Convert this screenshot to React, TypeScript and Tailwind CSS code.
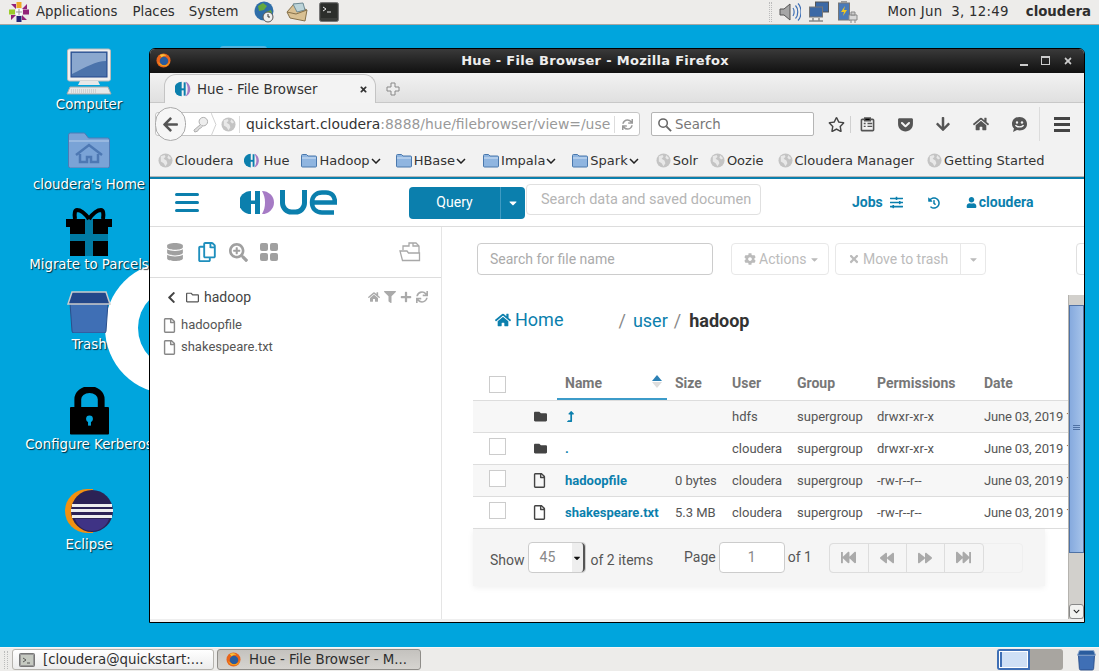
import React from 'react'
import {
  FaArrowDown,
  FaArrowLeft,
  FaBackward,
  FaCaretDown,
  FaChevronDown,
  FaChevronLeft,
  FaCog,
  FaDatabase,
  FaFastBackward,
  FaFastForward,
  FaFilter,
  FaFolder,
  FaForward,
  FaGetPocket,
  FaHistory,
  FaHome,
  FaLevelUpAlt,
  FaPlus,
  FaRegCopy,
  FaRegFile,
  FaRegFolder,
  FaRegStar,
  FaSearchPlus,
  FaSlidersH,
  FaSync,
  FaTimes,
  FaUser,
} from 'react-icons/fa'

const sans = "font-['DejaVu_Sans',sans-serif]"
const roboto = "font-['Roboto',sans-serif]"

const Globe = ({ className = '' }: { className?: string }) => (
  <svg viewBox="0 0 16 16" className={`h-[15px] w-[15px] shrink-0 ${className}`}>
    <circle cx="8" cy="8" r="7.5" fill="#c4c4c4" />
    <path d="M3 3.5 7 2l1 2-2 2 3 2 1 3-2 3-2-3-3-2ZM11 2.5l3 3-2 1.5-2-2Z" fill="#e8e8e8" />
  </svg>
)

const HueMark = ({ className = '' }: { className?: string }) => (
  <svg viewBox="0 0 24 24" className={className}>
    <path d="M10 1a11 11 0 0 0 0 22Z" fill="#0b7fad" />
    <path d="M6 11h8v3H6Z" fill="#0b7fad" />
    <path d="M13 2h3v20h-3Z" fill="#0b7fad" />
    <path d="M16 1c2 4 3 7 3 11s-1 7-3 11c4-1 7-6 7-11S20 2 16 1Z" fill="#a67bc5" />
  </svg>
)

const FolderMini = () => (
  <svg viewBox="0 0 16 15" className="h-[15px] w-[16px] shrink-0">
    <path d="M.5 2.5a1 1 0 0 1 1-1h4l1.5 1.5h7.5a1 1 0 0 1 1 1v9a1 1 0 0 1-1 1h-13a1 1 0 0 1-1-1Z" fill="#8fb5e0" stroke="#4a78ad" />
    <path d="M1 5h14" stroke="#d3e3f5" />
  </svg>
)

const Firefox = ({ className = '' }: { className?: string }) => (
  <svg viewBox="0 0 16 16" className={className}>
    <circle cx="8" cy="8" r="7.5" fill="#e8641b" />
    <circle cx="8.5" cy="8.5" r="4.5" fill="#2a5c9e" />
    <path d="M2 9c1 4 5 6 9 5 2-1 4-3 4-6-1 3-3 5-6 5-3 0-5-2-7-4Z" fill="#f3a11e" />
    <path d="M4 2c2-1 5-1 7 1-2-.5-4 0-5 1.500Z" fill="#f6c33a" />
  </svg>
)

const PanelLogo = () => (
  <svg viewBox="0 0 22 22" className="h-[22px] w-[22px]">
    <rect x="8.500" y="1" width="5" height="6" fill="#efa724" />
    <rect x="15" y="8.500" width="6" height="5" fill="#932279" />
    <rect x="8.500" y="15" width="5" height="6" fill="#262577" />
    <rect x="1" y="8.500" width="6" height="5" fill="#9ccd2a" />
    <path d="M3 3h5v5Z M19 3v5h-5Z M19 19h-5v-5Z M3 19v-5h5Z" fill="#932279" />
    <path d="M8 8h6v6H8Z" fill="#fff" />
    <path d="M11 8v6M8 11h6" stroke="#999" />
  </svg>
)

const TopPanel = () => (
  <div className={`flex h-[25px] shrink-0 items-center border-b border-[#a8a6a2] bg-[#edecea] text-[13.33px] text-[#2e2e2e] ${sans}`}>
    <div className="ml-[8px]">
      <PanelLogo />
    </div>
    <span className="ml-[6px]">Applications</span>
    <span className="ml-[15px]">Places</span>
    <span className="ml-[14px]">System</span>
    <svg viewBox="0 0 22 22" className="ml-[14px] h-[22px] w-[22px]">
      <circle cx="11" cy="10" r="9.500" fill="#2e6da8" />
      <path d="M5 5l5-3 4 3-3 4-5 1ZM13 11l5-2 1 3-4 4Z" fill="#63a83c" />
      <circle cx="15" cy="16" r="5" fill="#eee" stroke="#555" />
      <path d="M15 13v3h2" stroke="#333" fill="none" />
    </svg>
    <svg viewBox="0 0 22 22" className="ml-[11px] h-[22px] w-[22px]">
      <path d="M1 11 8 3l13 6-2 11-15-3Z" fill="#d9c193" stroke="#86714a" />
      <path d="M7 3l10-1 2 7-8 2Z" fill="#bcd4d9" stroke="#6d8a94" />
      <path d="M1 11l9 2 11-4" fill="none" stroke="#86714a" />
    </svg>
    <svg viewBox="0 0 20 20" className="ml-[11px] h-[20px] w-[20px]">
      <rect x=".5" y=".5" width="19" height="19" rx="2" fill="#3b3d3a" stroke="#777" />
      <rect x="2" y="2" width="16" height="14" fill="#2c2e2b" />
      <path d="M4 5l3 2-3 2M8 10h4" stroke="#eee" fill="none" />
    </svg>
    <div className="ml-auto flex items-center">
      <div className="mr-[7px] h-[20px] w-[3px] border-x border-dotted border-[#bbb]" />
      <svg viewBox="0 0 22 22" className="h-[22px] w-[22px]">
        <path d="M1 8h4l6-5v16l-6-5H1Z" fill="#a6a6a6" stroke="#555" />
        <path d="M14 7c1.500 2 1.500 6 0 8M16.500 4.500c3 3 3 10 0 13M19 2.500c4 4 4 13 0 17" fill="none" stroke="#3e6fb5" strokeWidth="1.200" />
      </svg>
      <svg viewBox="0 0 22 22" className="ml-[7px] h-[22px] w-[22px]">
        <rect x="7.500" y="1" width="13" height="10" fill="#3c69a6" stroke="#555" />
        <rect x="1.500" y="6" width="13" height="10" fill="#3c69a6" stroke="#777" />
        <path d="M1 20h14M5 17v3M11 17v3" stroke="#888" strokeWidth="1.500" />
      </svg>
      <svg viewBox="0 0 22 24" className="ml-[7px] h-[24px] w-[22px]">
        <rect x="1.500" y="3" width="11" height="17" fill="#4a7ab8" stroke="#777" />
        <rect x="4" y="1" width="6" height="2" fill="#999" />
        <path d="M8 6 4 12h3l-1 4 4-6H7Z" fill="#f2c81f" />
        <path d="M12 15h8v5h-8Z" fill="#d8d8d8" stroke="#888" />
        <path d="M14 12h4v3h-4ZM14 20v3M18 20v3" fill="#ccc" stroke="#888" />
      </svg>
      <span className="ml-[28px] tracking-[0.25px]">Mon Jun&nbsp; 3, 12:49</span>
      <span className="ml-[17px] mr-[8px] font-bold">cloudera</span>
    </div>
  </div>
)

const DesktopIcon = ({ top, label, children }: { top: number; label: string; children: React.ReactNode }) => (
  <div className="absolute left-[9px] flex w-[160px] flex-col items-center" style={{ top: top - 25 }}>
    <div className="flex h-[50px] items-end">{children}</div>
    <span className={`mt-[1px] whitespace-nowrap text-[13.33px] leading-[16px] text-white [text-shadow:1px_1px_1px_rgba(0,0,0,0.75)] ${sans}`}>{label}</span>
  </div>
)

const Desktop = () => (
  <>
    {/* big logo on the wallpaper, mostly hidden by the window */}
    <div className="absolute left-[105px] top-[237px] h-[132px] w-[132px] rounded-full bg-white" />
    <div className="absolute left-[138px] top-[262px] h-[82px] w-[82px] rounded-full bg-[#00a5dd]" />
    <div className="absolute left-[220px] top-[21px] h-[3px] w-[47px] rounded-t-sm bg-[#4fb4e0]" />

    <DesktopIcon top={46} label="Computer">
      <svg viewBox="0 0 46 48" className="h-[48px] w-[46px]">
        <rect x="1.500" y="1" width="43" height="32" rx="2" fill="#f0f0f0" stroke="#bbb" />
        <rect x="5" y="4" width="36" height="25" fill="#4b73ab" stroke="#23478a" />
        <path d="M6 5h34v8c-10 0-20 6-34 13Z" fill="#8ba8cf" />
        <path d="M14 33h18l2 4H12Z" fill="#e8e8e8" />
        <path d="M4 39h38l3 7H1Z" fill="#e8e8e8" stroke="#aaa" />
        <path d="M5 42h26M5 44h26" stroke="#bbb" strokeDasharray="1 1" />
      </svg>
    </DesktopIcon>
    <DesktopIcon top={126} label="cloudera's Home">
      <svg viewBox="0 0 42 36" className="mb-[8px] h-[36px] w-[42px]">
        <path d="M.5 3a2 2 0 0 1 2-2h14l4 5h19a2 2 0 0 1 2 2v26a2 2 0 0 1-2 2h-37a2 2 0 0 1-2-2Z" fill="#7aa3d6" stroke="#4d7ab5" />
        <path d="M1 9h40" stroke="#b6cdea" />
        <path d="M8 23 21 13l13 10M12 22v8h7v-5h4v5h7v-8" fill="none" stroke="#4d78b3" strokeWidth="2.500" />
      </svg>
    </DesktopIcon>
    <DesktopIcon top={206} label="Migrate to Parcels">
      <svg viewBox="0 0 46 48" className="h-[48px] w-[46px]">
        <path d="M4 14h38v34H4Z" fill="#000" />
        <path d="M0 11h46v8H0Z" fill="#000" />
        <path d="M19 11h8v37h-8ZM4 26h38v7H4Z" fill="#007aa3" />
        <path d="M23 11C18 4 14 2 11 2c-2 0-3 3-2 9M23 11c5-7 9-9 12-9 2 0 3 3 2 9" fill="none" stroke="#000" strokeWidth="4" />
      </svg>
    </DesktopIcon>
    <DesktopIcon top={286} label="Trash">
      <svg viewBox="0 0 44 42" className="mb-[3px] h-[42px] w-[44px]">
        <path d="M3 12h38l-2 28a2 2 0 0 1-2 2H7a2 2 0 0 1-2-2Z" fill="#3f6fb5" stroke="#2a4f8c" />
        <path d="M5 1h34l4 12H1Z" fill="#23478a" stroke="#ccc" strokeWidth="1.500" />
      </svg>
    </DesktopIcon>
    <DesktopIcon top={386} label="Configure Kerberos">
      <svg viewBox="0 0 40 48" className="mb-[1px] h-[48px] w-[39px]">
        <path d="M8 20V12a12 10 0 0 1 24 0v8" fill="none" stroke="#000" strokeWidth="7" />
        <rect x="0" y="20" width="40" height="28" rx="1" fill="#000" />
        <circle cx="20" cy="32" r="3.500" fill="#00a5dd" />
        <path d="M18.500 33h3v6h-3Z" fill="#00a5dd" />
      </svg>
    </DesktopIcon>
    <DesktopIcon top={486} label="Eclipse">
      <svg viewBox="0 0 48 44" className="mb-[3px] -ml-[1px] h-[44px] w-[48px]">
        <path d="M22 0a22 22 0 0 0 0 44h6V0Z" fill="#f29111" />
        <circle cx="27" cy="22" r="21" fill="#2c2255" />
        <path d="M10 30a18 18 0 0 0 34 0Z" fill="#3f3385" />
        <path d="M7 15h40v3H7ZM6 20h42v3H6ZM7 26h40v3H7Z" fill="#eee" />
      </svg>
    </DesktopIcon>
  </>
)

const TabBar = () => (
  <div className={`flex h-[30px] shrink-0 items-end border-b border-[#c8c8c8] bg-gradient-to-b from-[#f2f2f2] to-[#e0e0e0] pl-[14px] ${sans}`}>
    <div className="-mb-px flex h-[29px] w-[212px] items-center rounded-t-[12px] border border-b-0 border-[#c4c4c4] bg-[#f3f3f3] pl-[10px] pr-[7px]">
      <HueMark className="h-[16px] w-[16px]" />
      <span className="ml-[6px] pt-px text-[13.33px] text-[#333]">Hue - File Browser</span>
      <FaTimes className="ml-auto text-[9px] text-[#333]" />
    </div>
    <svg viewBox="0 0 14 14" className="mb-[6px] ml-[10px] h-[14px] w-[14px]">
      <path d="M5 1h4v4h4v4H9v4H5V9H1V5h4Z" fill="#eee" stroke="#888" />
    </svg>
  </div>
)

const NavBar = () => (
  <div className={`flex h-[42px] shrink-0 items-center bg-[#f2f2f2] pl-[5px] ${sans}`}>
    <div className="relative flex h-[24px] w-[485px] items-center rounded-[3px] border border-[#c5c5c5] bg-white pl-[36px]">
      <div className="absolute -left-[1px] top-[-6px] flex h-[34px] w-[31px] items-center justify-center rounded-full border border-[#aaa] bg-[#f6f6f6]">
        <FaArrowLeft className="text-[17px] text-[#555]" />
      </div>
      <svg viewBox="0 0 18 18" className="h-[17px] w-[17px]">
        <circle cx="12" cy="6" r="4.500" fill="#eee" stroke="#aaa" />
        <path d="M9 9 2 15l1 2 3-1 1-2 2-1 2-2" fill="#ddd" stroke="#aaa" />
      </svg>
      <svg viewBox="0 0 6 24" className="ml-[2px] h-[23px] w-[6px]">
        <path d="M0 0l5 12-5 12" fill="none" stroke="#d0d0d0" />
      </svg>
      <Globe className="ml-[4px]" />
      <div className="ml-[3px] h-[17px] w-px bg-[#ddd]" />
      <span className="ml-[6px] whitespace-nowrap text-[13.9px] text-[#333]">
        quickstart.cloudera<span className="text-[#999]">:8888/hue/filebrowser/view=/use</span>
      </span>
      <div className="ml-auto mr-[7px] h-[17px] w-px bg-[#ddd]" />
      <FaSync className="mr-[6px] text-[11px] text-[#999]" />
    </div>
    <div className="ml-[11px] flex h-[24px] w-[163px] items-center rounded-[2px] border border-[#b5b5b5] bg-white pl-[5px]">
      <svg viewBox="0 0 16 16" className="h-[15px] w-[15px]">
        <circle cx="6.500" cy="6.500" r="4.500" fill="none" stroke="#666" strokeWidth="1.600" />
        <path d="M10 10l5 5" stroke="#666" strokeWidth="2" />
      </svg>
      <span className="ml-[3px] pt-px text-[13.33px] text-[#777]">Search</span>
    </div>
    <FaRegStar className="ml-[14px] text-[17px] text-[#444]" />
    <div className="ml-[5px] h-[17px] w-px bg-[#d0d0d0]" />
    <svg viewBox="0 0 16 16" className="ml-[9px] h-[15px] w-[15px]">
      <rect x="1.500" y="2.500" width="13" height="12" rx="1" fill="none" stroke="#555" strokeWidth="1.700" />
      <path d="M5 1h6v3H5ZM4 7h2M8 7h5M4 10h2M8 10h5" stroke="#555" strokeWidth="1.500" />
    </svg>
    <FaGetPocket className="ml-[22px] text-[17px] text-[#555]" />
    <FaArrowDown className="ml-[21px] text-[16px] text-[#555]" />
    <FaHome className="ml-[22px] text-[16px] text-[#555]" />
    <svg viewBox="0 0 17 17" className="ml-[22px] h-[17px] w-[17px]">
      <path d="M8.500 1C4 1 1 4 1 8c0 2 1 3.500 2 4.500L2 16l4-2c1 .3 2 .4 2.500.4C13 14.400 16 12 16 8s-3-7-7.500-7Z" fill="#555" />
      <circle cx="6" cy="6.500" r="1.200" fill="#f2f2f2" />
      <circle cx="11" cy="6.500" r="1.200" fill="#f2f2f2" />
      <path d="M4.500 9c1 2.500 7 2.500 8 0" fill="none" stroke="#f2f2f2" strokeWidth="1.300" />
    </svg>
    <div className="ml-[11px] h-[34px] w-px bg-[#dcdcdc]" />
    <div className="ml-[14px] flex w-[16px] flex-col gap-[3px]">
      <div className="h-[3px] bg-[#444]" />
      <div className="h-[3px] bg-[#444]" />
      <div className="h-[3px] bg-[#444]" />
    </div>
  </div>
)

const Bookmark = ({ icon, label, menu = false, gap }: { icon: React.ReactNode; label: string; menu?: boolean; gap: string }) => (
  <div className={`flex items-center ${gap}`}>
    {icon}
    <span className="ml-[2px]">{label}</span>
    {menu && (
      <svg viewBox="0 0 10 6" className="ml-px h-[6px] w-[10px]">
        <path d="M1 1l4 4 4-4" fill="none" stroke="#222" strokeWidth="1.500" />
      </svg>
    )}
  </div>
)

const BookmarksBar = () => (
  <div className={`flex h-[32px] shrink-0 items-center border-b border-[#b8b8b8] bg-[#f2f2f2] pl-[8px] text-[13px] text-[#333] ${sans}`}>
    <Bookmark icon={<Globe />} label="Cloudera" gap="ml-0" />
    <Bookmark icon={<HueMark className="mr-px h-[15px] w-[16px]" />} label="Hue" gap="ml-[11px]" />
    <Bookmark icon={<FolderMini />} label="Hadoop" menu gap="ml-[12px]" />
    <Bookmark icon={<FolderMini />} label="HBase" menu gap="ml-[15px]" />
    <Bookmark icon={<FolderMini />} label="Impala" menu gap="ml-[17px]" />
    <Bookmark icon={<FolderMini />} label="Spark" menu gap="ml-[16px]" />
    <Bookmark icon={<Globe />} label="Solr" gap="ml-[17px]" />
    <Bookmark icon={<Globe />} label="Oozie" gap="ml-[12px]" />
    <Bookmark icon={<Globe />} label="Cloudera Manager" gap="ml-[14px]" />
    <Bookmark icon={<Globe />} label="Getting Started" gap="ml-[13px]" />
  </div>
)

const HueHeader = () => (
  <div className={`relative flex h-[48px] shrink-0 items-center border-b border-[#ddd] bg-white ${roboto}`}>
    <div className="ml-[25px] flex w-[24px] flex-col gap-[5px]">
      <div className="h-[3px] rounded-sm bg-[#0b7fad]" />
      <div className="h-[3px] rounded-sm bg-[#0b7fad]" />
      <div className="h-[3px] rounded-sm bg-[#0b7fad]" />
    </div>
    <svg viewBox="0 0 97 25" className="ml-[41px] h-[25px] w-[97px]">
      <path d="M11 1a12 11.500 0 0 0 0 23Z" fill="#0b7fad" />
      <path d="M9 10.500h8v3.500H9Z" fill="#0b7fad" />
      <path d="M15 1h5v23h-5Z" fill="#0b7fad" />
      <path d="M22 1a12 11.500 0 0 1 0 23c2-3.500 3-7 3-11.500S24 4.500 22 1Z" fill="#a67bc5" />
      <path d="M42.500 0v13a9 9 0 0 0 9 9h4a9 9 0 0 0 9-9V0" fill="none" stroke="#0b7fad" strokeWidth="5" />
      <path d="M73 12.500h22c0-6-3-10-9-10h-4c-6 0-10 4-10 10s4 10 10 10h12" fill="none" stroke="#0b7fad" strokeWidth="4.500" />
    </svg>
    <div className="ml-[72px] flex h-[32px] w-[116px] items-center rounded-[4px] bg-[#0b7fad] text-[14px] text-white">
      <span className="flex-1 text-center">Query</span>
      <div className="flex h-full w-[25px] items-center justify-center border-l border-[#3f9bc2]">
        <FaCaretDown className="text-[12px]" />
      </div>
    </div>
    <div className="ml-px mb-[7px] flex h-[31px] w-[235px] items-center whitespace-nowrap rounded-[4px] border border-[#e0e0e0] pl-[14px] pt-px text-[14.5px] text-[#b5b5b5]">
      Search data and saved documen
    </div>
    <span className="ml-[91px] text-[14px] font-bold text-[#0b7fad]">Jobs</span>
    <FaSlidersH className="ml-[7px] text-[13px] text-[#0b7fad]" />
    <FaHistory className="ml-[25px] text-[12px] text-[#0b7fad]" />
    <FaUser className="ml-[26px] text-[11px] text-[#0b7fad]" />
    <span className="ml-[2px] text-[14px] font-bold text-[#0b7fad]">cloudera</span>
  </div>
)

const Assist = () => (
  <div className={`flex w-[292px] shrink-0 flex-col border-r border-[#e5e5e5] bg-white ${roboto}`}>
    <div className="flex h-[51px] shrink-0 items-center border-b border-[#ddd] pl-[16px] text-[#a0a0a0]">
      <FaDatabase className="text-[18px]" />
      <FaRegCopy className="ml-[13px] text-[20px] text-[#1f8fbd]" />
      <FaSearchPlus className="ml-[12px] text-[19px]" />
      <div className="ml-[12px] grid h-[18px] w-[18px] grid-cols-2 gap-[2px]">
        <div className="rounded-[2px] bg-[#a0a0a0]" />
        <div className="rounded-[2px] bg-[#a0a0a0]" />
        <div className="rounded-[2px] bg-[#a0a0a0]" />
        <div className="rounded-[2px] bg-[#a0a0a0]" />
      </div>
      <svg viewBox="0 0 22 20" className="ml-auto mr-[20px] h-[20px] w-[22px]">
        <path d="M4 8V4h6V1h7l3 3v13" fill="none" stroke="#a8a8a8" strokeWidth="1.300" />
        <path d="M14 1v3h6" fill="none" stroke="#a8a8a8" strokeWidth="1.300" />
        <path d="M1 9h7l1.500 2H20.500v7.500H3.500Z" fill="#fff" stroke="#a8a8a8" strokeWidth="1.300" />
      </svg>
    </div>
    <div className="mt-[9px] flex h-[20px] items-center pl-[15px] pr-[13px]">
      <FaChevronLeft className="text-[13px] text-[#444]" />
      <FaRegFolder className="ml-[8px] text-[13px] text-[#555]" />
      <span className="ml-[5px] text-[14px] text-[#444]">hadoop</span>
      <div className="ml-auto flex items-center gap-[4px] text-[12px] text-[#aaa]">
        <FaHome />
        <FaFilter />
        <FaPlus />
        <FaSync />
      </div>
    </div>
    <div className="mt-[7px] flex h-[22px] items-center pl-[12px] text-[13px] text-[#555]">
      <FaRegFile className="text-[15px] text-[#888]" />
      <span className="ml-[4px]">hadoopfile</span>
    </div>
    <div className="flex h-[22px] items-center pl-[12px] text-[13px] text-[#555]">
      <FaRegFile className="text-[15px] text-[#888]" />
      <span className="ml-[4px]">shakespeare.txt</span>
    </div>
  </div>
)

const Toolbar = () => (
  <div className="mt-[16px] flex h-[32px] shrink-0 items-stretch whitespace-nowrap pl-[35px] text-[14px] text-[#bbb]">
    <div className="flex w-[236px] shrink-0 items-center rounded-[4px] border border-[#ccc] pl-[12px] text-[#aaa]">Search for file name</div>
    <div className="ml-[18px] flex w-[98px] shrink-0 items-center rounded-[4px] border border-[#e8e8e8] pl-[12px]">
      <FaCog className="text-[12px]" />
      <span className="ml-[3px]">Actions</span>
      <FaCaretDown className="ml-[3px] text-[11px]" />
    </div>
    <div className="ml-[6px] flex w-[151px] shrink-0 items-center rounded-[4px] border border-[#e8e8e8]">
      <FaTimes className="ml-[12px] text-[12px]" />
      <span className="ml-[3px]">Move to trash</span>
      <div className="ml-auto flex h-full w-[25px] items-center justify-center border-l border-[#e8e8e8]">
        <FaCaretDown className="text-[11px]" />
      </div>
    </div>
    <div className="ml-[90px] w-[20px] shrink-0 rounded-[4px] border border-[#e0e0e0]" />
  </div>
)

const Breadcrumb = () => (
  <div className="mt-[32px] flex h-[26px] shrink-0 items-center whitespace-nowrap pl-[53px] text-[18px] text-[#0b7fad]">
    <FaHome className="text-[16px]" />
    <span className="ml-[4px] -translate-y-[1px]">Home</span>
    <span className="ml-[55px] text-[#888]">/</span>
    <span className="ml-[7px]">user</span>
    <span className="ml-[6px] text-[#888]">/</span>
    <span className="ml-[8px] font-bold text-[#333]">hadoop</span>
  </div>
)

const cols = 'grid grid-cols-[53px_31px_110px_57px_65px_80px_107px_92px]'

const Checkbox = () => <div className="ml-[16px] h-[17px] w-[17px] border border-[#ccc] bg-white" />

type Row = { up?: boolean; dir?: boolean; name: string; size: string; user: string; perm: string; check: boolean }

const rows: Row[] = [
  { up: true, dir: true, name: '', size: '', user: 'hdfs', perm: 'drwxr-xr-x', check: false },
  { dir: true, name: '.', size: '', user: 'cloudera', perm: 'drwxr-xr-x', check: true },
  { name: 'hadoopfile', size: '0 bytes', user: 'cloudera', perm: '-rw-r--r--', check: true },
  { name: 'shakespeare.txt', size: '5.3 MB', user: 'cloudera', perm: '-rw-r--r--', check: true },
]

const FileTable = () => (
  <div className="ml-[31px] mt-[37px] w-[595px] shrink-0 overflow-hidden whitespace-nowrap text-[13px] text-[#555]">
    <div className={`${cols} h-[31px] border-b border-[#ddd] text-[14px] font-bold text-[#777]`}>
      <div className="pt-[6px]">
        <Checkbox />
      </div>
      <div />
      <div className="relative flex items-start border-b-2 border-[#3c9bc9] pl-[8px] pt-[3px]">
        Name
        <div className="absolute right-[5px] top-[5px] flex flex-col gap-px">
          <div className="h-0 w-0 border-x-[5px] border-b-[6px] border-x-transparent border-b-[#2c81b5]" />
          <div className="h-0 w-0 border-x-[5px] border-t-[6px] border-x-transparent border-t-[#ddd]" />
        </div>
      </div>
      <div className="pl-[8px] pt-[3px]">Size</div>
      <div className="pl-[8px] pt-[3px]">User</div>
      <div className="pl-[8px] pt-[3px]">Group</div>
      <div className="pl-[8px] pt-[3px]">Permissions</div>
      <div className="pl-[8px] pt-[3px]">Date</div>
    </div>
    {rows.map((r, i) => (
      <div key={r.user + i} className={`${cols} h-[32px] items-center border-b border-[#ddd] ${i % 2 === 0 ? 'bg-[#f7f7f7]' : 'bg-white'}`}>
        <div className="-mt-[5px]">{r.check && <Checkbox />}</div>
        <div className="pl-[8px]">{r.dir ? <FaFolder className="text-[13px] text-[#444]" /> : <FaRegFile className="-ml-[2px] text-[15px] text-[#444]" />}</div>
        <div className="pl-[8px] font-bold text-[#0b7fad]">{r.up ? <FaLevelUpAlt className="text-[11px]" /> : r.name}</div>
        <div className="pl-[8px]">{r.size}</div>
        <div className="pl-[8px]">{r.user}</div>
        <div className="pl-[8px]">supergroup</div>
        <div className="pl-[8px]">{r.perm}</div>
        <div className="overflow-hidden pl-[8px] tracking-[-0.17px]">June 03, 2019 10:12 AM</div>
      </div>
    ))}
  </div>
)

const Pager = () => (
  <div className="ml-[31px] flex h-[57px] w-[572px] shrink-0 items-center whitespace-nowrap bg-[#f5f5f5] pl-[17px] text-[14px] text-[#555] shadow-[0_2px_6px_rgba(0,0,0,0.06)]">
    <span className="mt-[6px]">Show</span>
    <div className="ml-[3px] flex h-[31px] w-[58px] items-stretch rounded-[4px] border border-[#ccc] bg-white">
      <span className="flex flex-1 items-center pl-[11px] text-[#888]">45</span>
      <div className="flex w-[13px] items-center justify-center rounded-r-[4px] border-r-2 border-[#555] bg-[#eee]">
        <FaCaretDown className="text-[10px] text-[#111]" />
      </div>
    </div>
    <span className="ml-[5px] mt-[6px]">of 2 items</span>
    <span className="ml-[31px]">Page</span>
    <div className="ml-[3px] flex h-[31px] w-[66px] items-center justify-center rounded-[4px] border border-[#ccc] bg-white text-[#888]">1</div>
    <span className="ml-[3px]">of 1</span>
    <div className="ml-[17px] flex h-[30px] w-[194px] rounded-[4px] border border-[#efefef]">
      <div className="-m-px flex h-[30px] w-[155px] rounded-[4px] border border-[#ddd] text-[#aaa]">
        <div className="flex w-[38px] items-center justify-center"><FaFastBackward className="text-[15px]" /></div>
        <div className="flex w-[38px] items-center justify-center border-l border-[#ddd]"><FaBackward className="text-[14px]" /></div>
        <div className="flex w-[38px] items-center justify-center border-l border-[#ddd]"><FaForward className="text-[14px]" /></div>
        <div className="flex flex-1 items-center justify-center border-l border-[#ddd]"><FaFastForward className="text-[15px]" /></div>
      </div>
    </div>
  </div>
)

const Scrollbar = () => (
  <div className="absolute bottom-0 right-0 top-[68px] flex w-[16px] flex-col border-l border-[#b5b3ae] bg-[#d2d0cc]">
    <div className="relative mt-[10px] h-[248px] border border-[#4f72a5] bg-gradient-to-r from-[#86aade] to-[#a6c3ea]">
      <div className="absolute left-[3px] top-[119px] flex w-[7px] flex-col gap-px">
        <div className="h-px bg-[#4f72a5]" />
        <div className="h-px bg-[#4f72a5]" />
        <div className="h-px bg-[#4f72a5]" />
      </div>
    </div>
    <div className="mt-auto flex h-[15px] items-center justify-center rounded-[3px] border border-[#888] bg-[#f2f2f0]">
      <FaChevronDown className="text-[7px] text-[#222]" />
    </div>
  </div>
)

const FileBrowser = () => (
  <div className={`relative flex min-w-0 flex-1 flex-col overflow-hidden bg-white ${roboto}`}>
    <Toolbar />
    <Breadcrumb />
    <FileTable />
    <Pager />
    <Scrollbar />
  </div>
)

const BrowserWindow = () => (
  <div className="absolute left-[149px] top-[23px] flex h-[575px] w-[936px] flex-col rounded-t-[6px] border border-black bg-[#efefef]">
    <div className={`relative flex h-[24px] shrink-0 items-center justify-center rounded-t-[5px] bg-gradient-to-b from-[#3a3a3a] to-[#111] pr-[44px] text-[13px] font-bold tracking-[0.3px] text-[#eee] ${sans}`}>
      <Firefox className="absolute left-[6px] top-[4px] h-[15px] w-[15px]" />
      Hue - File Browser - Mozilla Firefox
      <div className="absolute right-[11px] top-[6px] flex items-center gap-[13px] text-[#ccc]">
        <div className="mt-[9px] h-[2px] w-[8px] bg-[#ccc]" />
        <div className="h-[9px] w-[9px] border-[1.5px] border-t-2 border-[#ccc]" />
        <FaTimes className="text-[10px]" />
      </div>
    </div>
    <TabBar />
    <NavBar />
    <BookmarksBar />
    <div className="h-[2px] shrink-0 bg-[#0b7fad]" />
    <HueHeader />
    <div className="flex min-h-0 flex-1">
      <Assist />
      <FileBrowser />
    </div>
    <div className="h-[3px] shrink-0 bg-[#efefef]" />
  </div>
)

const BottomPanel = () => (
  <div className={`flex h-[24px] shrink-0 items-center border-t border-[#f6f6f6] bg-[#edecea] text-[13.33px] text-[#2e2e2e] ${sans}`}>
    <div className="ml-[4px] h-[18px] w-[4px] border-x border-dotted border-[#bbb]" />
    <div className="ml-[4px] flex h-[21px] w-[202px] items-center rounded-[3px] border border-[#b5b3ae] bg-gradient-to-b from-white to-[#ececec] pl-[6px]">
      <svg viewBox="0 0 16 16" className="h-[16px] w-[16px]">
        <rect x=".5" y="1.500" width="15" height="13" rx="1" fill="#999" stroke="#777" />
        <rect x="2" y="3" width="12" height="10" fill="#c5c9c1" />
        <path d="M4 6l3 2-3 2M8 11h3" stroke="#555" fill="none" />
      </svg>
      <span className="ml-[8px] whitespace-nowrap">[cloudera@quickstart:...</span>
    </div>
    <div className="ml-[3px] flex h-[21px] w-[204px] items-center rounded-[3px] border border-[#8f8d89] bg-gradient-to-b from-[#c4c2be] to-[#d6d4d0] pl-[8px]">
      <Firefox className="h-[15px] w-[15px]" />
      <span className="ml-[8px] whitespace-nowrap">Hue - File Browser - M...</span>
    </div>
    <div className="ml-auto flex h-[21px] w-[66px] overflow-hidden rounded-[3px] bg-[#a8a5a0]">
      <div className="h-full w-[33px] border-2 border-l-[5px] border-[#3f6fb5] border-b-[#3f6fb5] bg-[#cfe0f6] [outline:1px_solid_#fff] [outline-offset:-3px]" />
    </div>
    <svg viewBox="0 0 20 22" className="ml-[14px] mr-[3px] h-[22px] w-[19px]">
      <path d="M1.500 5h17l-1 15a1.500 1.500 0 0 1-1.500 1.500H4A1.500 1.500 0 0 1 2.500 20Z" fill="#3f6fb5" stroke="#2a4f8c" />
      <path d="M2.500 1h15l2 5H.5Z" fill="#2a5c9e" stroke="#8da8cc" />
    </svg>
  </div>
)

export default function App() {
  return (
    <div className="flex h-[671px] w-[1099px] flex-col overflow-hidden bg-[#00a5dd]">
      <TopPanel />
      <div className="relative flex-1">
        <Desktop />
        <BrowserWindow />
      </div>
      <BottomPanel />
    </div>
  )
}
